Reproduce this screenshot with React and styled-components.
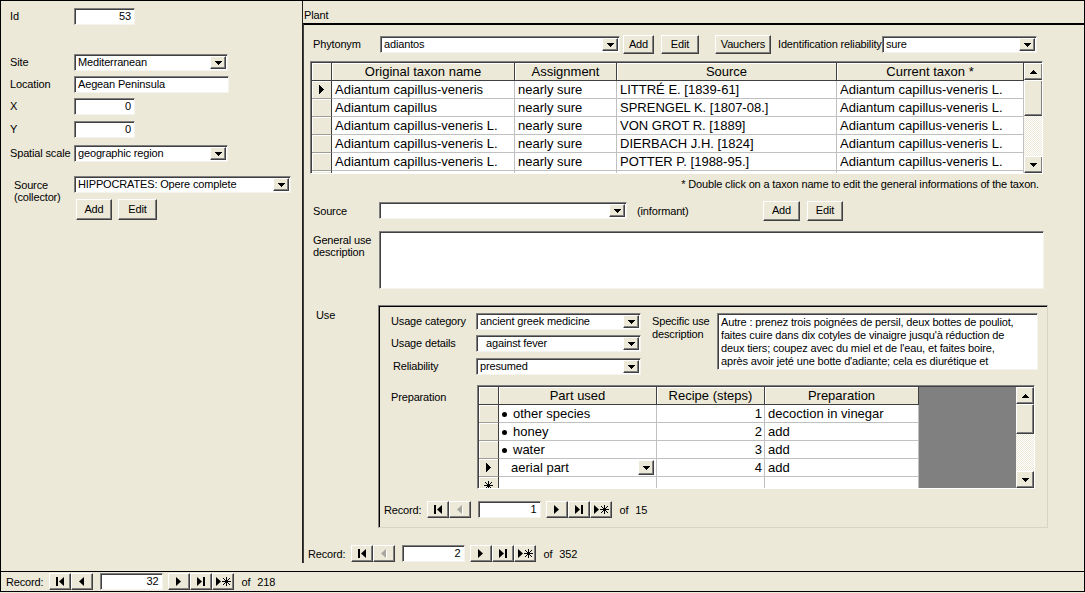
import React from "react";
import styled, { createGlobalStyle, css } from "styled-components";

const BG = "#ECE9D8";

const Global = createGlobalStyle`
  html, body { margin: 0; padding: 0; background: ${BG}; }
  body { font-family: "Liberation Sans", Arial, sans-serif; font-size: 11px; letter-spacing: -0.15px; color: #000; }
  * { box-sizing: border-box; }
`;

const raised = css`
  background: ${BG};
  border: 1px solid;
  border-color: #fff #404040 #404040 #fff;
  box-shadow: inset -1px -1px 0 #808080;
`;

const sunken = css`
  background: #fff;
  border: 1px solid;
  border-color: #808080 #f4f3ee #f4f3ee #808080;
  box-shadow: inset 1px 1px 0 #404040;
`;

/* ---------- glyphs ---------- */
const PixTri = ({ dir, size, color = "#000" }) => {
  const rects = [];
  for (let i = 0; i < size; i++) {
    const len = 2 * (size - i) - 1;
    if (dir === "down") rects.push(<rect key={i} x={i} y={i} width={len} height={1} />);
    if (dir === "up") rects.push(<rect key={i} x={i} y={size - 1 - i} width={len} height={1} />);
    if (dir === "right") rects.push(<rect key={i} x={i} y={i} width={1} height={len} />);
    if (dir === "left") rects.push(<rect key={i} x={size - 1 - i} y={i} width={1} height={len} />);
  }
  const horiz = dir === "down" || dir === "up";
  return (
    <svg width={horiz ? 2 * size - 1 : size} height={horiz ? size : 2 * size - 1} fill={color} shapeRendering="crispEdges">
      {rects}
    </svg>
  );
};

const Star = ({ x = 0, s = 9 }) => {
  const c = s / 2;
  return (
    <g stroke="#000" strokeWidth="1" shapeRendering="crispEdges">
      <line x1={x + c} y1={0} x2={x + c} y2={s} />
      <line x1={x} y1={c} x2={x + s} y2={c} />
      <line x1={x + 1} y1={1} x2={x + s - 1} y2={s - 1} />
      <line x1={x + s - 1} y1={1} x2={x + 1} y2={s - 1} />
    </g>
  );
};

const triPath = (x, dir) =>
  dir === "right" ? `M${x} 0 L${x + 5} 4.5 L${x} 9 Z` : `M${x + 5} 0 L${x} 4.5 L${x + 5} 9 Z`;

const NavGlyph = ({ kind, disabled }) => {
  if (kind === "first")
    return (
      <svg width="9" height="9">
        <rect x="0" y="0" width="2" height="9" fill="#000" />
        <path d={triPath(3, "left")} fill="#000" />
      </svg>
    );
  if (kind === "prev")
    return disabled ? (
      <svg width="7" height="10">
        <path d="M6 1 L1.5 5.5 L6 10 Z" fill="#fff" />
        <path d={triPath(0, "left")} fill="#a7a69c" />
      </svg>
    ) : (
      <svg width="6" height="9">
        <path d={triPath(0, "left")} fill="#000" />
      </svg>
    );
  if (kind === "next")
    return (
      <svg width="6" height="9">
        <path d={triPath(0, "right")} fill="#000" />
      </svg>
    );
  if (kind === "last")
    return (
      <svg width="9" height="9">
        <path d={triPath(0, "right")} fill="#000" />
        <rect x="6" y="0" width="2" height="9" fill="#000" />
      </svg>
    );
  return (
    <svg width="15" height="9">
      <path d={triPath(0, "right")} fill="#000" />
      <Star x={6} s={9} />
    </svg>
  );
};

const NewRowStar = () => (
  <svg width="9" height="9">
    <Star x={0} s={9} />
  </svg>
);

/* ---------- layout ---------- */
const Window = styled.div`
  width: 1085px;
  height: 592px;
  border: 1px solid #000;
  display: flex;
  flex-direction: column;
  background: ${BG};
  overflow: hidden;
`;

const Main = styled.div`
  display: flex;
  align-items: flex-start;
  height: 570px;
  flex-shrink: 0;
`;

const LeftPanel = styled.div`
  width: 301px;
  height: 570px;
  flex-shrink: 0;
  padding-left: 9px;
  display: flex;
  flex-direction: column;
`;

const PlantSection = styled.div`
  width: 782px;
  height: 562px;
  border-left: 1px solid #202020;
  display: flex;
  flex-direction: column;
`;

const PlantTitle = styled.div`
  height: 22px;
  padding: 8px 0 0 1px;
  line-height: 13px;
`;

const PlantPanel = styled.div`
  flex: 1;
  border-top: 2px solid #000;
  border-left: 1px solid #404040;
  display: flex;
  flex-direction: column;
`;

const MainNavBar = styled.div`
  flex: 1;
  border-top: 1px solid #000;
  display: flex;
  align-items: center;
  padding-left: 5px;
`;

/* ---------- form parts ---------- */
const FormRow = styled.div`
  display: flex;
  align-items: ${(p) => (p.$top ? "flex-start" : "center")};
  margin-top: ${(p) => p.$mt || 0}px;
  padding-left: ${(p) => p.$pl || 0}px;
  min-height: ${(p) => p.$h || 17}px;
  flex-shrink: 0;
`;

const Label = styled.div`
  width: ${(p) => p.$w}px;
  flex-shrink: 0;
  padding-left: ${(p) => p.$indent || 0}px;
  padding-top: ${(p) => p.$pt || 0}px;
  margin-left: ${(p) => p.$ml || 0}px;
  line-height: ${(p) => p.$lh || 13}px;
  white-space: nowrap;
`;

const Field = styled.div`
  ${sunken};
  width: ${(p) => p.$w}px;
  height: ${(p) => p.$h || 17}px;
  flex-shrink: 0;
  margin-top: ${(p) => p.$mt || 0}px;
  margin-left: ${(p) => p.$ml || 0}px;
  display: flex;
  align-items: center;
  justify-content: ${(p) => (p.$right ? "flex-end" : "flex-start")};
  padding: 0 ${(p) => (p.$right ? 3 : 1)}px 0 3px;
  white-space: nowrap;
  overflow: hidden;
  line-height: 13px;
`;

const FieldText = styled.span`
  flex: 1;
  overflow: hidden;
  padding-left: ${(p) => p.$indent || 0}px;
`;

const DropBtn = styled.div`
  ${raised};
  width: 16px;
  height: ${(p) => p.$h || 13}px;
  flex-shrink: 0;
  display: flex;
  align-items: center;
  justify-content: center;
  margin-right: ${(p) => p.$mr || 0}px;
`;

const Combo = ({ w, value, indent, mt, ml }) => (
  <Field $w={w} $mt={mt} $ml={ml}>
    <FieldText $indent={indent}>{value}</FieldText>
    <DropBtn>
      <PixTri dir="down" size={4} />
    </DropBtn>
  </Field>
);

const Button = styled.div`
  ${raised};
  width: ${(p) => p.$w}px;
  height: ${(p) => p.$h || 20}px;
  flex-shrink: 0;
  margin-left: ${(p) => p.$ml || 0}px;
  display: flex;
  align-items: center;
  justify-content: center;
  line-height: 13px;
  padding-bottom: 1px;
`;

const TextArea = styled.div`
  ${sunken};
  width: ${(p) => p.$w}px;
  height: ${(p) => p.$h}px;
  flex-shrink: 0;
  padding: 2px 2px 0 3px;
  line-height: 13px;
  overflow: hidden;
  white-space: nowrap;
`;

const Footnote = styled.div`
  margin-top: 4px;
  height: 12px;
  line-height: 12px;
  text-align: right;
  padding-right: 45px;
  flex-shrink: 0;
`;

/* ---------- use subform ---------- */
const UseBox = styled.div`
  width: 670px;
  height: 223px;
  flex-shrink: 0;
  border: 1px solid;
  border-color: #808080 #d8d5c6 #d8d5c6 #808080;
  box-shadow: inset 1px 1px 0 #000;
  padding: 7px 0 0 12px;
  display: flex;
  flex-direction: column;
`;

const UseTop = styled.div`
  display: flex;
  align-items: flex-start;
  height: 62px;
  flex-shrink: 0;
`;

const Column = styled.div`
  display: flex;
  flex-direction: column;
`;

/* ---------- datasheet ---------- */
const Sheet = styled.div`
  width: ${(p) => p.$w}px;
  height: ${(p) => p.$h}px;
  flex-shrink: 0;
  margin-top: ${(p) => p.$mt || 0}px;
  margin-left: ${(p) => p.$ml || 0}px;
  border: 1px solid;
  border-color: #808080 #fff #fff #808080;
  box-shadow: inset 1px 1px 0 #404040;
  background: #fff;
  display: flex;
  overflow: hidden;
  padding: 1px 0 0 1px;
  letter-spacing: 0;
`;

const SheetBody = styled.div`
  width: ${(p) => p.$w}px;
  flex-shrink: 0;
  display: flex;
  flex-direction: column;
  overflow: hidden;
`;

const GrayFill = styled.div`
  flex: 1;
  background: #808080;
`;

const SheetRow = styled.div`
  display: grid;
  grid-template-columns: ${(p) => p.$cols};
  height: 18px;
  flex-shrink: 0;
`;

const HeadCell = styled.div`
  background: ${BG};
  border-right: 1px solid #404040;
  border-bottom: 1px solid #404040;
  box-shadow: inset 1px 1px 0 #fff;
  font-size: 13px;
  line-height: 17px;
  text-align: center;
  white-space: nowrap;
  overflow: hidden;
`;

const SelCell = styled.div`
  background: ${BG};
  border-right: 1px solid #404040;
  border-bottom: 1px solid #a09e94;
  box-shadow: inset 1px 1px 0 #fff;
  display: flex;
  align-items: center;
  justify-content: center;
`;

const Cell = styled.div`
  background: #fff;
  border-right: 1px solid #c0c0c0;
  border-bottom: 1px solid #c0c0c0;
  font-size: 13px;
  line-height: 17px;
  padding: 0 ${(p) => (p.$align === "right" ? 2 : 3)}px 0 ${(p) => 3 + (p.$indent || 0)}px;
  white-space: nowrap;
  overflow: hidden;
  display: flex;
  align-items: center;
  justify-content: ${(p) => (p.$align === "right" ? "flex-end" : "space-between")};
`;

const CellText = styled.span`
  display: flex;
  align-items: center;
`;

const Bullet = styled.span`
  width: 5px;
  height: 5px;
  border-radius: 50%;
  background: #000;
  margin: 1px 6px 0 0;
  flex-shrink: 0;
`;

const ScrollBar = styled.div`
  width: ${(p) => p.$w}px;
  flex-shrink: 0;
  display: flex;
  flex-direction: column;
  background-color: ${BG};
`;

const ScrollBtn = styled.div`
  ${raised};
  height: 17px;
  flex-shrink: 0;
  display: flex;
  align-items: center;
  justify-content: center;
`;

const ScrollThumb = styled.div`
  ${raised};
  height: ${(p) => p.$h}px;
  flex-shrink: 0;
`;

const ScrollTrack = styled.div`
  flex: 1;
  background-image: repeating-conic-gradient(#fff 0% 25%, ${BG} 0% 50%);
  background-size: 2px 2px;
`;

const Scroller = ({ w, thumb }) => (
  <ScrollBar $w={w}>
    <ScrollBtn>
      <PixTri dir="up" size={4} />
    </ScrollBtn>
    <ScrollThumb $h={thumb} />
    <ScrollTrack />
    <ScrollBtn>
      <PixTri dir="down" size={4} />
    </ScrollBtn>
  </ScrollBar>
);

/* ---------- record navigator ---------- */
const NavWrap = styled.div`
  display: flex;
  align-items: center;
  height: 17px;
  flex-shrink: 0;
  margin-top: ${(p) => p.$mt || 0}px;
  margin-left: ${(p) => p.$ml || 0}px;
`;

const NavLabel = styled.span`
  margin-right: 6px;
`;

const NavBtn = styled.div`
  ${raised};
  width: 22px;
  height: 17px;
  display: flex;
  align-items: center;
  justify-content: center;
`;

const NavInput = styled.div`
  ${sunken};
  width: 63px;
  height: 17px;
  margin: 0 5px 0 7px;
  text-align: right;
  padding-right: 4px;
  line-height: 15px;
`;

const NavCount = styled.span`
  margin-left: 7px;
  display: flex;
  gap: 7px;
`;

const RecordNav = ({ current, total, prevDisabled, mt, ml }) => (
  <NavWrap $mt={mt} $ml={ml}>
    <NavLabel>Record:</NavLabel>
    <NavBtn>
      <NavGlyph kind="first" />
    </NavBtn>
    <NavBtn>
      <NavGlyph kind="prev" disabled={prevDisabled} />
    </NavBtn>
    <NavInput>{current}</NavInput>
    <NavBtn>
      <NavGlyph kind="next" />
    </NavBtn>
    <NavBtn>
      <NavGlyph kind="last" />
    </NavBtn>
    <NavBtn>
      <NavGlyph kind="new" />
    </NavBtn>
    <NavCount>
      <span>of</span>
      <span>{total}</span>
    </NavCount>
  </NavWrap>
);

/* ---------- data ---------- */
const taxa = [
  ["Adiantum capillus-veneris", "nearly sure", "LITTRÉ E. [1839-61]", "Adiantum capillus-veneris L."],
  ["Adiantum capillus", "nearly sure", "SPRENGEL K. [1807-08.]", "Adiantum capillus-veneris L."],
  ["Adiantum capillus-veneris L.", "nearly sure", "VON GROT R. [1889]", "Adiantum capillus-veneris L."],
  ["Adiantum capillus-veneris L.", "nearly sure", "DIERBACH J.H. [1824]", "Adiantum capillus-veneris L."],
  ["Adiantum capillus-veneris L.", "nearly sure", "POTTER P. [1988-95.]", "Adiantum capillus-veneris L."],
  ["", "", "", ""],
];

const preps = [
  ["other species", "1", "decoction in vinegar"],
  ["honey", "2", "add"],
  ["water", "3", "add"],
];

const specificLines = [
  "Autre : prenez trois poignées de persil, deux bottes de pouliot,",
  "faites cuire dans dix cotyles de vinaigre jusqu'à réduction de",
  "deux tiers; coupez avec du miel et de l'eau, et faites boire,",
  "après avoir jeté une botte d'adiante; cela es diurétique et",
];

const TaxonCols = "20px 183px 102px 220px 187px";
const PrepCols = "20px 158px 108px 154px";

const Line = styled.div``;

export default function App() {
  return (
    <>
      <Global />
      <Window>
        <Main>
          <LeftPanel>
            <FormRow $mt={7}>
              <Label $w={64}>Id</Label>
              <Field $w={61} $right>53</Field>
            </FormRow>
            <FormRow $mt={29}>
              <Label $w={64}>Site</Label>
              <Combo w={154} value="Mediterranean" />
            </FormRow>
            <FormRow $mt={5}>
              <Label $w={64}>Location</Label>
              <Field $w={155}>Aegean Peninsula</Field>
            </FormRow>
            <FormRow $mt={5}>
              <Label $w={64}>X</Label>
              <Field $w={61} $right>0</Field>
            </FormRow>
            <FormRow $mt={6}>
              <Label $w={64}>Y</Label>
              <Field $w={61} $right>0</Field>
            </FormRow>
            <FormRow $mt={7}>
              <Label $w={64}>Spatial scale</Label>
              <Combo w={154} value="geographic region" />
            </FormRow>
            <FormRow $mt={14} $top>
              <Label $w={64} $indent={4} $pt={3} $lh={12}>
                Source
                <br />
                (collector)
              </Label>
              <Column>
                <Combo w={217} value="HIPPOCRATES: Opere complete" />
                <FormRow $mt={6} $pl={2}>
                  <Button $w={36} $h={21}>Add</Button>
                  <Button $w={39} $h={21} $ml={6}>Edit</Button>
                </FormRow>
              </Column>
            </FormRow>
          </LeftPanel>

          <PlantSection>
            <PlantTitle>Plant</PlantTitle>
            <PlantPanel>
              <FormRow $mt={10} $pl={9} $top $h={20}>
                <Label $w={67} $pt={3}>Phytonym</Label>
                <Combo w={240} value="adiantos" mt={1} />
                <Button $w={31} $h={19} $ml={3}>Add</Button>
                <Button $w={38} $h={19} $ml={7}>Edit</Button>
                <Button $w={56} $h={19} $ml={16}>Vauchers</Button>
                <Label $w={102} $ml={7} $pt={3}>Identification reliability</Label>
                <Combo w={155} value="sure" mt={1} ml={2} />
              </FormRow>

              <Sheet $w={733} $h={113} $mt={6} $ml={6}>
                <SheetBody $w={712}>
                  <SheetRow $cols={TaxonCols}>
                    <HeadCell />
                    <HeadCell>Original taxon name</HeadCell>
                    <HeadCell>Assignment</HeadCell>
                    <HeadCell>Source</HeadCell>
                    <HeadCell>Current taxon *</HeadCell>
                  </SheetRow>
                  {taxa.map((r, i) => (
                    <SheetRow key={i} $cols={TaxonCols}>
                      <SelCell>{i === 0 && <PixTri dir="right" size={5} />}</SelCell>
                      <Cell>{r[0]}</Cell>
                      <Cell>{r[1]}</Cell>
                      <Cell>{r[2]}</Cell>
                      <Cell>{r[3]}</Cell>
                    </SheetRow>
                  ))}
                </SheetBody>
                <Scroller w={19} thumb={36} />
              </Sheet>

              <Footnote>* Double click on a taxon name to edit the general informations of the taxon.</Footnote>

              <FormRow $mt={11} $pl={9} $top $h={21}>
                <Label $w={66} $pt={4}>Source</Label>
                <Combo w={248} value="" mt={1} />
                <Label $w={126} $ml={10} $pt={4}>(informant)</Label>
                <Button $w={37} $h={20}>Add</Button>
                <Button $w={36} $h={20} $ml={7}>Edit</Button>
              </FormRow>

              <FormRow $mt={9} $pl={9} $top>
                <Label $w={66} $pt={3} $lh={12}>
                  General use
                  <br />
                  description
                </Label>
                <TextArea $w={665} $h={58} />
              </FormRow>

              <FormRow $mt={16} $pl={12} $top>
                <Label $w={62} $pt={4}>Use</Label>
                <UseBox>
                  <UseTop>
                    <Column>
                      <FormRow>
                        <Label $w={85}>Usage category</Label>
                        <Combo w={165} value="ancient greek medicine" />
                      </FormRow>
                      <FormRow $mt={5}>
                        <Label $w={85}>Usage details</Label>
                        <Combo w={165} value="against fever" indent={6} />
                      </FormRow>
                      <FormRow $mt={6}>
                        <Label $w={85} $indent={2}>Reliability</Label>
                        <Combo w={165} value="presumed" />
                      </FormRow>
                    </Column>
                    <Label $w={65} $ml={11} $pt={2} $lh={13}>
                      Specific use
                      <br />
                      description
                    </Label>
                    <TextArea $w={321} $h={57}>
                      {specificLines.map((l, i) => (
                        <Line key={i}>{l}</Line>
                      ))}
                    </TextArea>
                  </UseTop>

                  <FormRow $mt={10} $top>
                    <Label $w={86} $pt={6}>Preparation</Label>
                    <Sheet $w={558} $h={104}>
                      <SheetBody $w={440}>
                        <SheetRow $cols={PrepCols}>
                          <HeadCell />
                          <HeadCell>Part used</HeadCell>
                          <HeadCell>Recipe (steps)</HeadCell>
                          <HeadCell>Preparation</HeadCell>
                        </SheetRow>
                        {preps.map((r, i) => (
                          <SheetRow key={i} $cols={PrepCols}>
                            <SelCell />
                            <Cell>
                              <CellText>
                                <Bullet />
                                {r[0]}
                              </CellText>
                            </Cell>
                            <Cell $align="right">{r[1]}</Cell>
                            <Cell>{r[2]}</Cell>
                          </SheetRow>
                        ))}
                        <SheetRow $cols={PrepCols}>
                          <SelCell>
                            <PixTri dir="right" size={5} />
                          </SelCell>
                          <Cell $indent={9}>
                            <span>aerial part</span>
                            <DropBtn $h={15} $mr={-1}>
                              <PixTri dir="down" size={4} />
                            </DropBtn>
                          </Cell>
                          <Cell $align="right">4</Cell>
                          <Cell>add</Cell>
                        </SheetRow>
                        <SheetRow $cols={PrepCols}>
                          <SelCell>
                            <NewRowStar />
                          </SelCell>
                          <Cell />
                          <Cell />
                          <Cell />
                        </SheetRow>
                      </SheetBody>
                      <GrayFill />
                      <Scroller w={18} thumb={30} />
                    </Sheet>
                  </FormRow>

                  <RecordNav current="1" total="15" prevDisabled mt={12} ml={-7} />
                </UseBox>
              </FormRow>

              <RecordNav current="2" total="352" prevDisabled mt={17} ml={4} />
            </PlantPanel>
          </PlantSection>
        </Main>
        <MainNavBar>
          <RecordNav current="32" total="218" />
        </MainNavBar>
      </Window>
    </>
  );
}
